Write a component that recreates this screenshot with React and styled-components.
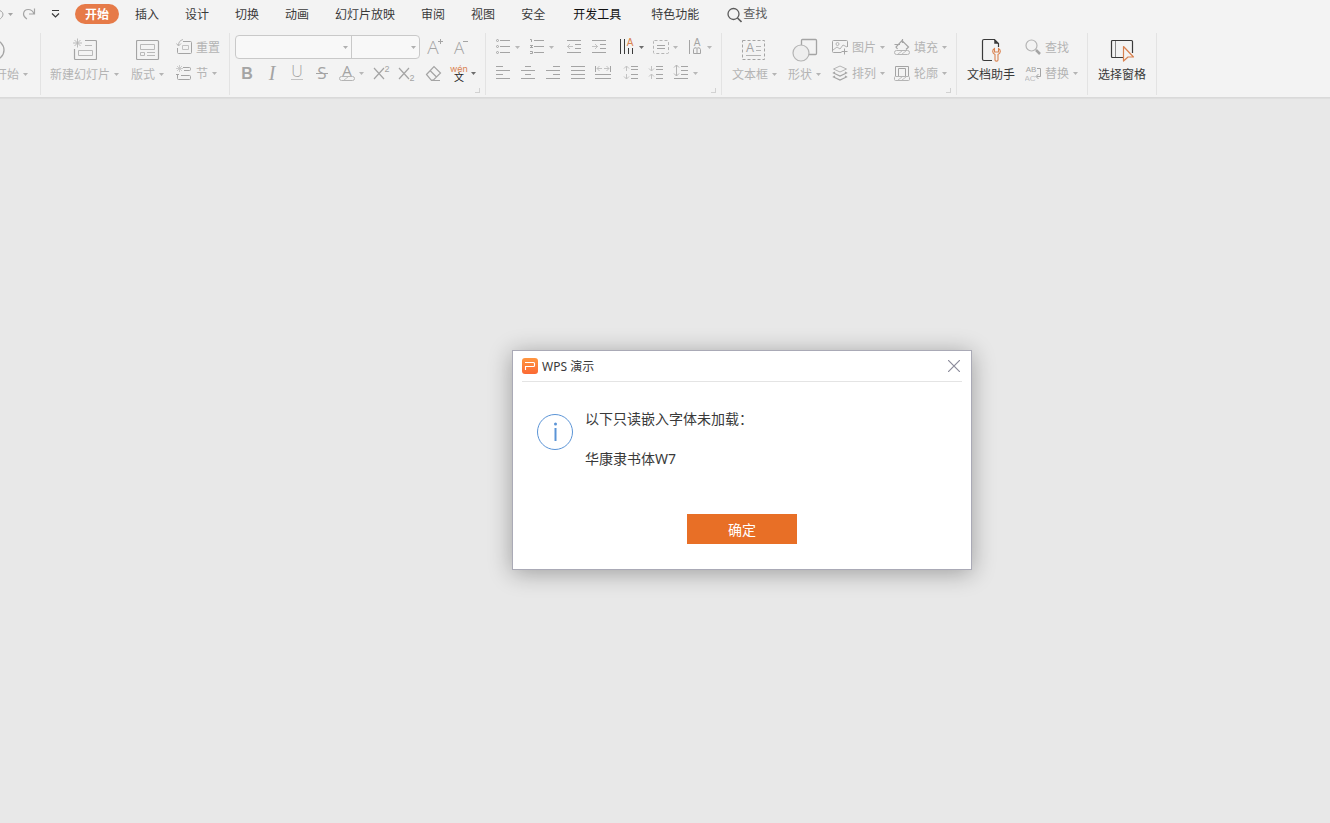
import React from "react";
import styled, { createGlobalStyle } from "styled-components";

const MUTED = "#a4a4a4";
const FAINT = "#c2c2c2";
const DARK = "#3a3a3a";
const ACCENT = "#d98250";

const GlobalStyle = createGlobalStyle`
  * { box-sizing: border-box; }
  body {
    margin: 0;
    background: #e8e8e8;
    color: ${DARK};
    font: 12px/16px "Noto Sans", "Noto Sans CJK SC", sans-serif;
  }
  button, select {
    margin: 0;
    padding: 0;
    border: 0;
    background: none;
    color: inherit;
    font: inherit;
  }
  svg { display: block; flex: none; }
`;

const Page = styled.div`
  display: flex;
  flex-direction: column;
  min-height: 100vh;
  overflow: hidden;
`;

const Ribbon = styled.header`
  background: #f3f3f3;
  border-bottom: 1px solid #d9d9d9;
  box-shadow: 0 1px 1px #dedede;
`;

const TabBar = styled.div`
  display: flex;
  align-items: center;
  height: 30px;
  padding-bottom: 2px;
`;

const QuickAccess = styled.div`
  display: flex;
  align-items: center;
  gap: 4px;
  width: 75px;
  margin-left: -10px;
  margin-right: 10px;
`;

const QuickButton = styled.button`
  display: flex;
  color: ${(p) => (p.$dark ? DARK : MUTED)};
  margin-left: ${(p) => p.$space || 0}px;
`;

const Tabs = styled.nav`
  display: flex;
  align-items: center;
`;

const Tab = styled.button`
  height: 20px;
  padding: 2px ${(p) => (p.$wide ? 15 : 13)}px 0;
  white-space: nowrap;
  color: ${(p) => (p.$strong ? "#111111" : DARK)};
`;

const ActiveTab = styled(Tab)`
  padding: 2px 10px 0;
  margin-right: 3px;
  border-radius: 10px;
  background: #e67a48;
  color: #ffffff;
  font-weight: 700;
`;

const SearchTab = styled.button`
  display: flex;
  align-items: center;
  gap: 1px;
  margin-left: 13px;
  color: #5c5c5c;
  white-space: nowrap;
`;

const Toolbar = styled.div`
  display: flex;
  height: 67px;
`;

const Group = styled.section`
  position: relative;
  flex: none;
  display: flex;
  align-items: flex-start;
  gap: ${(p) => p.$gap || 0}px;
  width: ${(p) => p.$width}px;
  padding: 4px 0 0 ${(p) => p.$pad || 0}px;
`;

const StartGroup = styled(Group)`
  justify-content: flex-end;
  padding-right: 12px;
  overflow: hidden;
`;

const Separator = styled.div`
  flex: none;
  width: 1px;
  height: 62px;
  margin-top: 3px;
  background: #e3e3e3;
`;

const Launcher = styled.button`
  position: absolute;
  right: 5px;
  bottom: 4px;
  width: 5px;
  height: 5px;
  border: solid #d2d2d2;
  border-width: 0 1px 1px 0;
`;

const Rows = styled.div`
  display: grid;
  grid-template-rows: 26px 26px;
`;

const Row = styled.div`
  display: flex;
  align-items: center;
  gap: ${(p) => p.$gap || 0}px;
`;

const Tool = styled.button`
  display: flex;
  align-items: center;
  width: ${(p) => (p.$drop ? 34 : 24)}px;
  color: ${(p) => (p.disabled ? "#b8b8b8" : "#6c6c6c")};
`;

const SmallButton = styled.button`
  display: flex;
  align-items: center;
  gap: 4px;
  white-space: nowrap;
  color: #b4b4b4;
`;

const Caption = styled.span`
  padding-top: 2px;
`;

const SmallGrid = styled.div`
  display: grid;
  grid-template-rows: 26px 26px;
  grid-auto-flow: column;
  column-gap: 9px;
`;

const BigButton = styled.button`
  flex: none;
  display: flex;
  flex-direction: column;
  align-items: center;
  gap: 3px;
  width: ${(p) => (p.$width ? p.$width + "px" : "auto")};
  padding-top: 4px;
  white-space: nowrap;
  color: ${(p) => (p.disabled ? "#b4b4b4" : DARK)};
`;

const BigLabel = styled.span`
  display: flex;
  align-items: center;
  gap: 4px;
  align-self: ${(p) => (p.$end ? "flex-end" : "center")};
`;

const Combos = styled.div`
  display: flex;
  width: 185px;
  height: 24px;
  border: 1px solid #c9c9c9;
  border-radius: 4px;
  background: #f8f8f8;
`;

const Combo = styled.label`
  position: relative;
  flex: ${(p) => p.$grow} 0 0;
  color: #b0b0b0;
  & + & { border-left: 1px solid #c9c9c9; }
  select {
    appearance: none;
    width: 100%;
    height: 100%;
    padding: 0 16px 0 6px;
    opacity: 1;
  }
  svg {
    position: absolute;
    right: 3px;
    top: 10px;
    pointer-events: none;
  }
`;

const Workspace = styled.main`
  flex: 1;
  display: flex;
  align-items: center;
  justify-content: center;
  padding: 0 0 2px 154px;
`;

const Dialog = styled.section`
  width: 460px;
  border: 1px solid #aaaab6;
  background: #ffffff;
  box-shadow: 0 3px 22px rgba(0, 0, 0, 0.32);
`;

const DialogHeader = styled.header`
  display: flex;
  align-items: center;
  gap: 4px;
  height: 31px;
  margin: 0 9px;
  border-bottom: 1px solid #e4e4e4;
`;

const DialogTitle = styled.h1`
  flex: 1;
  margin: 0;
  padding-top: 2px;
  font-size: 12px;
  line-height: 16px;
  font-weight: 400;
`;

const CloseButton = styled.button`
  display: flex;
  padding-right: 2px;
`;

const DialogBody = styled.div`
  display: flex;
  gap: 12px;
  padding: 27px 24px 0;
`;

const InfoMark = styled.div`
  padding-top: 5px;
`;

const Message = styled.div`
  font-size: 14px;
  line-height: 20px;
  p { margin: 0 0 20px; }
`;

const DialogFooter = styled.footer`
  display: flex;
  justify-content: center;
  padding: 25px 0;
`;

const OkButton = styled.button`
  width: 110px;
  height: 30px;
  padding-top: 2px;
  background: #e86f26;
  color: #ffffff;
  font-size: 14px;
  line-height: 20px;
`;

const Caret = () => (
  <svg width="5" height="3" viewBox="0 0 5 3" aria-hidden="true">
    <path d="M0 0h5L2.5 3z" fill="currentColor" />
  </svg>
);

const Icon = ({ w = 24, h = 24, color = MUTED, children }) => (
  <svg width={w} height={h} viewBox={`0 0 ${w} ${h}`} fill="none" stroke={color} aria-hidden="true">
    {children}
  </svg>
);

const Glyph = ({ size = 16, fill = MUTED, family = "Liberation Sans", children, ...rest }) => (
  <text textAnchor="middle" fontSize={size} fontFamily={`"${family}", "Noto Sans CJK SC", sans-serif`} fill={fill} stroke="none" {...rest}>
    {children}
  </text>
);

const ToolButton = ({ label, drop, active, children }) => (
  <Tool type="button" aria-label={label} $drop={drop} disabled={!active}>
    <Icon>{children}</Icon>
    {drop && <Caret />}
  </Tool>
);

const StartIcon = () => (
  <Icon w={24} h={24}>
    <circle cx="12" cy="12" r="10" strokeWidth="1.3" />
    <path d="M10 8l6 4-6 4z" />
  </Icon>
);

const NewSlideIcon = () => (
  <Icon>
    <path d="M12 2.500h10.500a1 1 0 0 1 1 1v17a1 1 0 0 1-1 1h-20a1 1 0 0 1-1-1V11" strokeWidth="1.200" />
    <path d="M4.500 0.500v9M0 5h9M1.500 2l6 6M7.500 2l-6 6" stroke="#b4b4b4" strokeWidth="0.900" />
    <path d="M12 7.500h7M5.500 12.500h14v5h-14z" stroke="#b9b9b9" />
  </Icon>
);

const LayoutIcon = () => (
  <Icon>
    <rect x="0.500" y="2.500" width="22" height="19" rx="1" strokeWidth="1.200" />
    <path d="M4.500 6.500h14v5h-14zM4.500 14.500h4v3h-4zM11 14.500h8M11 17.500h8" stroke="#b9b9b9" />
  </Icon>
);

const ResetIcon = () => (
  <Icon w={16} h={16}>
    <path d="M7 2.500h7.500a1 1 0 0 1 1 1v10a1 1 0 0 1-1 1h-12a1 1 0 0 1-1-1V9" />
    <path d="M0.500 4.500l2 2.500 2.500-2.500M2.500 6.500C2.500 3 4 1.500 7 0.500" stroke="#b4b4b4" />
    <path d="M6.500 6.500h6v4h-6z" stroke={FAINT} />
  </Icon>
);

const SectionIcon = () => (
  <Icon w={16} h={16}>
    <path d="M7 2.500h6.500a1 1 0 0 1 1 1v1a1 1 0 0 1-1 1H8M1.500 9v4.500a1 1 0 0 0 1 1h11a1 1 0 0 0 1-1v-2a1 1 0 0 0-1-1H5M0 9.500h3" />
    <path d="M3.500 0v7M0 3.500h7M1 1l5 5M6 1L1 6" stroke={FAINT} strokeWidth="0.800" />
  </Icon>
);

const TextBoxIcon = () => (
  <Icon w={28}>
    <rect x="1.500" y="2.500" width="22" height="19" strokeDasharray="3 2" />
    <Glyph x="9" y="14" size={12}>A</Glyph>
    <path d="M15 8.500h5M15 12.500h5M5 17.500h15" stroke="#b4b4b4" />
  </Icon>
);

const ShapeIcon = () => (
  <Icon w={26}>
    <rect x="9.500" y="1.500" width="15" height="15" rx="1" strokeWidth="1.300" />
    <circle cx="9" cy="15" r="8" fill="#eeeeee" stroke="#b4b4b4" strokeWidth="1.200" />
  </Icon>
);

const PictureIcon = () => (
  <Icon w={16} h={16}>
    <path d="M9.500 13.500h-8a1 1 0 0 1-1-1v-10a1 1 0 0 1 1-1h13a1 1 0 0 1 1 1V8" />
    <circle cx="5.500" cy="5" r="1.500" stroke="#b4b4b4" />
    <path d="M1 11l4-3 3 2 3-4 4 2" stroke="#b4b4b4" />
    <path d="M9.500 12.500h6M12.500 9.500v6" />
  </Icon>
);

const ArrangeIcon = () => (
  <Icon w={16} h={16}>
    <path d="M8 1l6.500 3L8 7 1.500 4z" stroke="#b4b4b4" />
    <path d="M3 7L1.500 8 8 11l6.500-3L13 7M3 11l-1.500 1L8 15l6.500-3-1.500-1" strokeWidth="1.200" />
  </Icon>
);

const FillIcon = () => (
  <Icon w={16} h={16}>
    <path d="M3.500 10L2 8l6-6.500L14.500 8 12 10.500M0.500 5.500H6M8.500 0v4" strokeWidth="1.200" />
    <rect x="0.500" y="11.500" width="15" height="4" rx="2" stroke="#b4b4b4" />
    <path d="M4 15l4-3M8 15l4-3" stroke={FAINT} />
  </Icon>
);

const OutlineIcon = () => (
  <Icon w={16} h={16}>
    <path d="M1.500 11V1.500h13V11M4.500 11V3.500h7V11" />
    <rect x="0.500" y="11.500" width="15" height="4" rx="1" stroke="#b4b4b4" />
    <path d="M4 15l4-3M8 15l4-3" stroke={FAINT} />
  </Icon>
);

const AssistantIcon = () => (
  <Icon>
    <path d="M13 22.500H5a1.500 1.500 0 0 1-1.500-1.500V3A1.500 1.500 0 0 1 5 1.500h10.500l4 4V9" stroke={DARK} strokeWidth="1.200" />
    <path d="M15.500 1.500v4h4z" fill={DARK} stroke={DARK} strokeWidth="0.500" />
    <path d="M15.500 10.500c-2.500 1.500-2.500 4.500 0.500 6v5.500c0 1.500 3 1.500 3 0v-5.500c3-1.500 3-4.500 0.500-6v3.500h-4z" fill="#f3f3f3" stroke={ACCENT} strokeWidth="1.100" />
  </Icon>
);

const FindIcon = () => (
  <Icon w={16} h={16}>
    <circle cx="6.500" cy="6.500" r="5.500" stroke="#b4b4b4" strokeWidth="1.200" />
    <path d="M11 11l4 4" strokeWidth="2.500" />
  </Icon>
);

const ReplaceIcon = () => (
  <Icon w={16} h={18}>
    <Glyph x="6" y="8" size={8}>AB</Glyph>
    <Glyph x="5" y="17" size={8} fill="#bdbdbd">AC</Glyph>
    <path d="M12 4.500h3.500v8h-4M13.500 10l-2.500 2.500 2.500 2.500" />
  </Icon>
);

const PaneIcon = () => (
  <Icon>
    <path d="M13 19.500H2.500a1 1 0 0 1-1-1v-15a1 1 0 0 1 1-1h19a1 1 0 0 1 1 1V15" stroke={DARK} strokeWidth="1.200" />
    <path d="M5.500 3v16" stroke="#888888" />
    <path d="M13.500 8.500l10 10.500h-5.500l-4.500 4z" fill="#f3f3f3" stroke={ACCENT} strokeWidth="1.200" strokeLinejoin="round" />
  </Icon>
);

const SearchIcon = () => (
  <Icon w={15} h={17} color="#5c5c5c">
    <circle cx="6.500" cy="8" r="5.500" strokeWidth="1.300" />
    <path d="M10.500 12l4 4" strokeWidth="1.600" />
  </Icon>
);

const WpsLogo = () => (
  <svg width="16" height="16" viewBox="0 0 16 16" aria-hidden="true">
    <defs>
      <linearGradient id="wps" x1="0" y1="0" x2="0" y2="1">
        <stop offset="0" stopColor="#ff9640" />
        <stop offset="1" stopColor="#fb6934" />
      </linearGradient>
    </defs>
    <rect width="16" height="16" rx="3" fill="url(#wps)" />
    <path d="M3 4.500h8.500a1 1 0 0 1 1 1v2a1 1 0 0 1-1 1H3.500V12" fill="none" stroke="#ffffff" strokeWidth="1.100" />
  </svg>
);

const Small = ({ label, icon, drop }) => (
  <SmallButton type="button" disabled>
    {icon}
    <Caption>{label}</Caption>
    {drop && <Caret />}
  </SmallButton>
);

const Big = ({ label, icon, drop, active, width, end }) => (
  <BigButton type="button" disabled={!active} $width={width}>
    {icon}
    <BigLabel $end={end}>
      <Caption>{label}</Caption>
      {drop && <Caret />}
    </BigLabel>
  </BigButton>
);

const TABS = ["插入", "设计", "切换", "动画", "幻灯片放映", "审阅", "视图", "安全"];

const FontTools = () => (
  <Rows>
    <Row $gap={2}>
      <Combos>
        <Combo $grow={116}>
          <select aria-label="字体"><option /></select>
          <Caret />
        </Combo>
        <Combo $grow={68}>
          <select aria-label="字号"><option /></select>
          <Caret />
        </Combo>
      </Combos>
      <ToolButton label="增大字号">
        <Glyph x="11" y="19" size={19} family="Open Sans" fontWeight="300">A</Glyph>
        <path d="M16 6.500h5M18.500 4v5" />
      </ToolButton>
      <ToolButton label="减小字号">
        <Glyph x="11" y="19" size={17} family="Open Sans" fontWeight="300">A</Glyph>
        <path d="M15 6.500h5" />
      </ToolButton>
    </Row>
    <Row $gap={2}>
      <Row $gap={1}>
        <ToolButton label="加粗"><Glyph x="12" y="18" size={16} fontWeight="700">B</Glyph></ToolButton>
        <ToolButton label="倾斜"><Glyph x="12" y="19" size={20} family="Liberation Serif" fontStyle="italic">I</Glyph></ToolButton>
        <ToolButton label="下划线">
          <Glyph x="12" y="16" size={16} family="Open Sans" fontWeight="300">U</Glyph>
          <path d="M6 18.500h12" stroke={FAINT} />
        </ToolButton>
        <ToolButton label="删除线">
          <Glyph x="12" y="18" size={17} family="Open Sans">S</Glyph>
          <path d="M6 12.500h12" />
        </ToolButton>
        <ToolButton label="字体颜色" drop>
          <Glyph x="12" y="15" size={15} family="Open Sans">A</Glyph>
          <rect x="4.500" y="15.500" width="15" height="4" rx="2" stroke="#b4b4b4" />
          <path d="M9 19l4-3" stroke={FAINT} />
        </ToolButton>
        <ToolButton label="上标">
          <path d="M4 7l10 11M14 7L4 18" strokeWidth="1.200" />
          <Glyph x="17" y="11" size={9}>2</Glyph>
        </ToolButton>
        <ToolButton label="下标">
          <path d="M4 7l10 11M14 7L4 18" strokeWidth="1.200" />
          <Glyph x="17" y="20" size={9}>2</Glyph>
        </ToolButton>
      </Row>
      <Row $gap={2}>
        <ToolButton label="清除格式">
          <path d="M5.500 13.500L13 5.500l6.500 6.500-7 7H10zM9 9.500l6.500 6.500M10 19.500h9" strokeWidth="1.200" />
        </ToolButton>
        <ToolButton label="拼音指南" drop active>
          <Glyph x="12" y="11" size={9} fill={ACCENT} family="Inter">wén</Glyph>
          <Glyph x="12" y="20" size={10} fill="#222222" family="Noto Sans CJK SC">文</Glyph>
        </ToolButton>
      </Row>
    </Row>
  </Rows>
);

const ParagraphTools = () => (
  <Rows>
    <Row $gap={4}>
      <Row>
        <ToolButton label="项目符号" drop>
          <path d="M9 5.500h10M9 11.500h10M9 17.500h10" />
          <circle cx="6.500" cy="5.500" r="1" /><circle cx="6.500" cy="11.500" r="1" /><circle cx="6.500" cy="17.500" r="1" />
        </ToolButton>
        <ToolButton label="编号" drop>
          <path d="M9 5.500h10M9 11.500h10M9 17.500h10" />
          <path d="M5 4.500h1.500V7M5 10.500h3M5 12.500h3M6.500 10v3M5 16.500h2.500v2H5" />
        </ToolButton>
      </Row>
      <Row>
        <ToolButton label="减少缩进">
          <path d="M4 5.500h14M12 9.500h6M12 13.500h6M4 17.500h14" />
          <path d="M4 11.500h6M7 9l-2.500 2.500L7 14" stroke={FAINT} />
        </ToolButton>
        <ToolButton label="增加缩进">
          <path d="M5 5.500h14M13 9.500h6M13 13.500h6M5 17.500h14" />
          <path d="M5 11.500h6M8 9l2.500 2.500L8 14" stroke={FAINT} />
        </ToolButton>
      </Row>
      <Row>
        <ToolButton label="文字方向" drop active>
          <path d="M5.500 4v15M9.500 4v15M13.500 13v6M17.500 13v6" stroke={DARK} />
          <Glyph x="15" y="11" size={10} fill={ACCENT}>A</Glyph>
        </ToolButton>
        <ToolButton label="对齐文本" drop>
          <rect x="4.500" y="5.500" width="15" height="13" rx="1" stroke="#b4b4b4" strokeDasharray="3 2" />
          <path d="M8 10.500h8M8 13.500h8" />
        </ToolButton>
        <ToolButton label="文字排列" drop>
          <path d="M6.500 5v14" />
          <Glyph x="14" y="11" size={10}>A</Glyph>
          <path d="M10.500 18.500v-4a2 2 0 0 1 3.500-1 2 2 0 0 1 3.500 1v4zM14 14v4" />
        </ToolButton>
      </Row>
    </Row>
    <Row $gap={4}>
      <Row $gap={1}>
        <ToolButton label="左对齐"><path d="M5 5.500h7M5 9.500h14M5 13.500h7M5 17.500h14" /></ToolButton>
        <ToolButton label="居中"><path d="M9 5.500h6M5 9.500h14M9 13.500h6M5 17.500h14" /></ToolButton>
        <ToolButton label="右对齐"><path d="M12 5.500h7M5 9.500h14M12 13.500h7M5 17.500h14" /></ToolButton>
        <ToolButton label="两端对齐"><path d="M5 5.500h14M5 9.500h14M5 13.500h14M5 17.500h14" /></ToolButton>
        <ToolButton label="分散对齐">
          <path d="M4.500 5v6M19.500 5v6M4 13.500h16M4 17.500h16" />
          <path d="M6 7.500h5M8.500 5L6 7.500 8.500 10M13 7.500h5M15.500 5L18 7.500 15.500 10" stroke={FAINT} />
        </ToolButton>
      </Row>
      <Row $gap={1}>
        <ToolButton label="增加段落间距">
          <path d="M12 5.500h7M12 8.500h7M12 13.500h7M12 17.500h7" />
          <path d="M7.500 5v5M5 7.500L7.500 5 10 7.500M7.500 13v5M5 15.500L7.500 18 10 15.500" stroke={FAINT} />
        </ToolButton>
        <ToolButton label="减少段落间距">
          <path d="M12 5.500h7M12 8.500h7M12 13.500h7M12 17.500h7" />
          <path d="M7.500 5v5M5 7.500L7.500 10 10 7.500M7.500 13v5M5 15.500L7.500 13 10 15.500" stroke={FAINT} />
        </ToolButton>
        <ToolButton label="行距" drop>
          <path d="M12 5.500h7M12 9.500h7M12 13.500h7M5 17.500h14" />
          <path d="M7.500 4v11M5 6.500L7.500 4 10 6.500M5 12.500L7.500 15 10 12.500" stroke="#b4b4b4" />
        </ToolButton>
      </Row>
    </Row>
  </Rows>
);

export default function App() {
  return (
    <Page>
      <GlobalStyle />
      <Ribbon>
        <TabBar>
          <QuickAccess>
            <QuickButton type="button" aria-label="撤销">
              <Icon w={14} h={14}><path d="M2 3v4h4M2 7c2-5 10-5 11 0 0 3-2 4-4 6" /></Icon>
            </QuickButton>
            <QuickButton type="button" aria-label="撤销记录"><Caret /></QuickButton>
            <QuickButton type="button" aria-label="恢复" $space={5}>
              <Icon w={14} h={14}><path d="M12.500 1.500v5.500H7M12 7C10 1 2 1 1.500 7c0 3 2 4 3.500 5" strokeWidth="1.200" /></Icon>
            </QuickButton>
            <QuickButton type="button" aria-label="自定义快速访问工具栏" $dark $space={11}>
              <Icon w={9} h={8} color={DARK}><path d="M1 0.500h7M1 3.500l3.500 3.500L8 3.500" strokeWidth="1.200" /></Icon>
            </QuickButton>
          </QuickAccess>
          <Tabs>
            <ActiveTab type="button">开始</ActiveTab>
            {TABS.map((t) => <Tab key={t} type="button">{t}</Tab>)}
            <Tab type="button" $wide $strong>开发工具</Tab>
            <Tab type="button" $wide>特色功能</Tab>
          </Tabs>
          <SearchTab type="button"><SearchIcon />查找</SearchTab>
        </TabBar>
        <Toolbar>
          <StartGroup $width={40}>
            <Big label="开始" icon={<StartIcon />} drop width={69} end />
          </StartGroup>
          <Separator />
          <Group $width={188} $pad={9} $gap={12}>
            <Big label="新建幻灯片" icon={<NewSlideIcon />} drop />
            <Big label="版式" icon={<LayoutIcon />} drop />
            <SmallGrid>
              <Small label="重置" icon={<ResetIcon />} />
              <Small label="节" icon={<SectionIcon />} drop />
            </SmallGrid>
          </Group>
          <Separator />
          <Group $width={255} $pad={5}>
            <FontTools />
            <Launcher type="button" aria-label="字体设置" />
          </Group>
          <Separator />
          <Group $width={235} $pad={5}>
            <ParagraphTools />
            <Launcher type="button" aria-label="段落设置" />
          </Group>
          <Separator />
          <Group $width={234} $pad={10} $gap={11}>
            <Big label="文本框" icon={<TextBoxIcon />} drop />
            <Big label="形状" icon={<ShapeIcon />} drop />
            <SmallGrid>
              <Small label="图片" icon={<PictureIcon />} drop />
              <Small label="排列" icon={<ArrangeIcon />} drop />
              <Small label="填充" icon={<FillIcon />} drop />
              <Small label="轮廓" icon={<OutlineIcon />} drop />
            </SmallGrid>
            <Launcher type="button" aria-label="绘图设置" />
          </Group>
          <Separator />
          <Group $width={130} $pad={10} $gap={10}>
            <Big label="文档助手" icon={<AssistantIcon />} active />
            <SmallGrid>
              <Small label="查找" icon={<FindIcon />} />
              <Small label="替换" icon={<ReplaceIcon />} drop />
            </SmallGrid>
          </Group>
          <Separator />
          <Group $width={68} $pad={10}>
            <Big label="选择窗格" icon={<PaneIcon />} active />
          </Group>
          <Separator />
        </Toolbar>
      </Ribbon>
      <Workspace>
        <Dialog role="dialog" aria-labelledby="dialog-title">
          <DialogHeader>
            <WpsLogo />
            <DialogTitle id="dialog-title">WPS 演示</DialogTitle>
            <CloseButton type="button" aria-label="关闭">
              <Icon w={12} h={12} color="#8b8b9b"><path d="M0 0l12 12M12 0L0 12" strokeWidth="1.200" /></Icon>
            </CloseButton>
          </DialogHeader>
          <DialogBody>
            <InfoMark>
              <Icon w={36} h={36} color="#5b94d6">
                <circle cx="18" cy="18" r="17.500" />
                <path d="M18.500 14v13" strokeWidth="2" />
                <circle cx="18.500" cy="10" r="1.500" fill="#5b94d6" stroke="none" />
              </Icon>
            </InfoMark>
            <Message>
              <p>以下只读嵌入字体未加载：</p>
              <p>华康隶书体W7</p>
            </Message>
          </DialogBody>
          <DialogFooter>
            <OkButton type="button">确定</OkButton>
          </DialogFooter>
        </Dialog>
      </Workspace>
    </Page>
  );
}
